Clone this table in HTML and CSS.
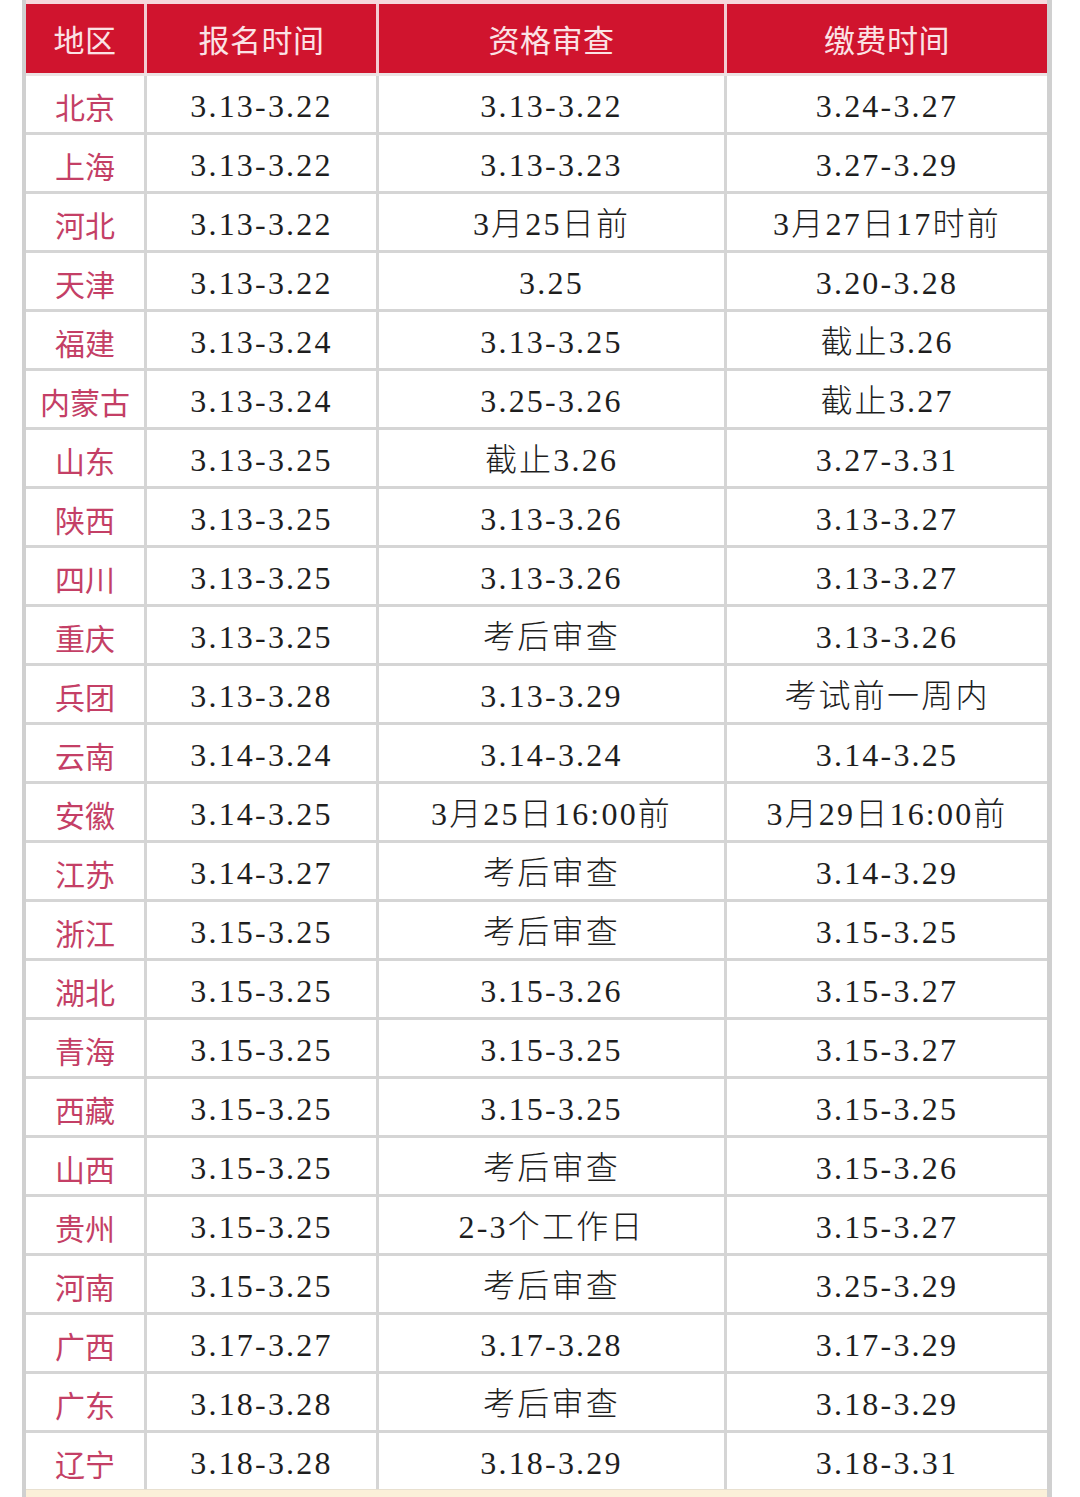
FILE: index.html
```html
<!DOCTYPE html>
<html lang="zh-CN">
<head>
<meta charset="utf-8">
<title>报名时间表</title>
<link rel="stylesheet" href="styles.css">
</head>
<body>
<div class="sheet">
  <div class="head">
    <div class="hc">地区</div>
    <div class="hc">报名时间</div>
    <div class="hc">资格审查</div>
    <div class="hc">缴费时间</div>
  </div>
  <div class="body">
    <div class="rc">北京</div><div class="dc">3.13-3.22</div><div class="dc">3.13-3.22</div><div class="dc">3.24-3.27</div>
    <div class="rc">上海</div><div class="dc">3.13-3.22</div><div class="dc">3.13-3.23</div><div class="dc">3.27-3.29</div>
    <div class="rc">河北</div><div class="dc">3.13-3.22</div><div class="dc">3月25日前</div><div class="dc">3月27日17时前</div>
    <div class="rc">天津</div><div class="dc">3.13-3.22</div><div class="dc">3.25</div><div class="dc">3.20-3.28</div>
    <div class="rc">福建</div><div class="dc">3.13-3.24</div><div class="dc">3.13-3.25</div><div class="dc">截止3.26</div>
    <div class="rc">内蒙古</div><div class="dc">3.13-3.24</div><div class="dc">3.25-3.26</div><div class="dc">截止3.27</div>
    <div class="rc">山东</div><div class="dc">3.13-3.25</div><div class="dc">截止3.26</div><div class="dc">3.27-3.31</div>
    <div class="rc">陕西</div><div class="dc">3.13-3.25</div><div class="dc">3.13-3.26</div><div class="dc">3.13-3.27</div>
    <div class="rc">四川</div><div class="dc">3.13-3.25</div><div class="dc">3.13-3.26</div><div class="dc">3.13-3.27</div>
    <div class="rc">重庆</div><div class="dc">3.13-3.25</div><div class="dc">考后审查</div><div class="dc">3.13-3.26</div>
    <div class="rc">兵团</div><div class="dc">3.13-3.28</div><div class="dc">3.13-3.29</div><div class="dc">考试前一周内</div>
    <div class="rc">云南</div><div class="dc">3.14-3.24</div><div class="dc">3.14-3.24</div><div class="dc">3.14-3.25</div>
    <div class="rc">安徽</div><div class="dc">3.14-3.25</div><div class="dc">3月25日16:00前</div><div class="dc">3月29日16:00前</div>
    <div class="rc">江苏</div><div class="dc">3.14-3.27</div><div class="dc">考后审查</div><div class="dc">3.14-3.29</div>
    <div class="rc">浙江</div><div class="dc">3.15-3.25</div><div class="dc">考后审查</div><div class="dc">3.15-3.25</div>
    <div class="rc">湖北</div><div class="dc">3.15-3.25</div><div class="dc">3.15-3.26</div><div class="dc">3.15-3.27</div>
    <div class="rc">青海</div><div class="dc">3.15-3.25</div><div class="dc">3.15-3.25</div><div class="dc">3.15-3.27</div>
    <div class="rc">西藏</div><div class="dc">3.15-3.25</div><div class="dc">3.15-3.25</div><div class="dc">3.15-3.25</div>
    <div class="rc">山西</div><div class="dc">3.15-3.25</div><div class="dc">考后审查</div><div class="dc">3.15-3.26</div>
    <div class="rc">贵州</div><div class="dc">3.15-3.25</div><div class="dc">2-3个工作日</div><div class="dc">3.15-3.27</div>
    <div class="rc">河南</div><div class="dc">3.15-3.25</div><div class="dc">考后审查</div><div class="dc">3.25-3.29</div>
    <div class="rc">广西</div><div class="dc">3.17-3.27</div><div class="dc">3.17-3.28</div><div class="dc">3.17-3.29</div>
    <div class="rc">广东</div><div class="dc">3.18-3.28</div><div class="dc">考后审查</div><div class="dc">3.18-3.29</div>
    <div class="rc">辽宁</div><div class="dc">3.18-3.28</div><div class="dc">3.18-3.29</div><div class="dc">3.18-3.31</div>
  </div>
  <div class="foot"></div>
</div>
</body>
</html>
```
FILE: styles.css
```css
html, body {
  margin: 0;
  padding: 0;
  background: #ffffff;
}
body {
  width: 1080px;
  height: 1497px;
  overflow: hidden;
  font-family: "Liberation Serif", serif;
}
.sheet {
  margin-left: 22px;
  width: 1021px;
  border-left: 4px solid #d0d0d0;
  border-right: 5px solid #d0d0d0;
}
.head {
  display: grid;
  grid-template-columns: 118px 229px 345px 320px;
  column-gap: 3px;
  height: 69px;
  background: #f3ccd2;
  border-top: 4px solid #f6d9dd;
  border-bottom: 3px solid #ece3e4;
}
.hc {
  background: #d0142e;
  color: #fbe2e5;
  font-family: "Noto Sans CJK SC", sans-serif;
  font-size: 31px;
  line-height: 36px;
  letter-spacing: 0.5px;
  display: flex;
  align-items: center;
  justify-content: center;
  padding-top: 1px;
}
.body {
  display: grid;
  grid-template-columns: 118px 229px 345px 320px;
  grid-auto-rows: 56px;
  gap: 3px;
  background: #d5d5d5;
}
.rc, .dc {
  background: #ffffff;
  display: flex;
  align-items: center;
  justify-content: center;
  padding-top: 4px;
  box-sizing: border-box;
  line-height: 36px;
}
.rc {
  color: #c43f66;
  font-family: "Noto Sans CJK SC", sans-serif;
  font-size: 30px;
}
.dc {
  color: #1e1e1e;
  font-family: "Liberation Serif", "Noto Sans CJK SC", serif;
  font-size: 32px;
  font-weight: 300;
  letter-spacing: 2.2px;
}
.foot {
  height: 10px;
  background: #fbf0d9;
  border-top: 1px solid #e8e0d0;
}
```
